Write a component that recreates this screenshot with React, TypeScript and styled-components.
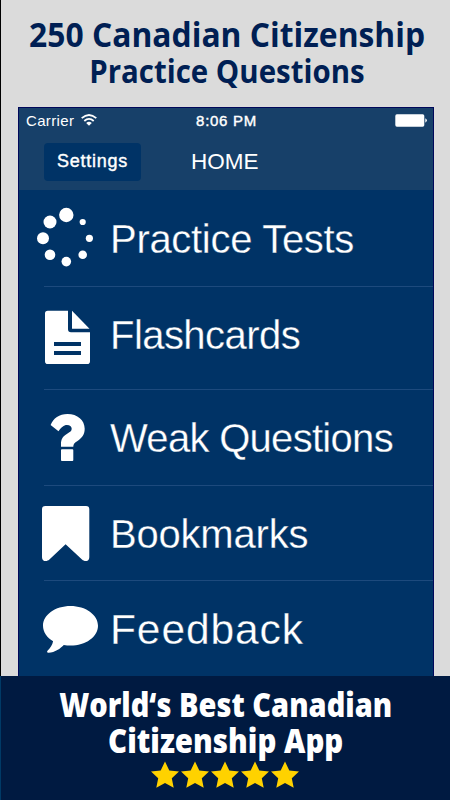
import React from "react";
import styled, { createGlobalStyle } from "styled-components";

const GlobalStyle = createGlobalStyle`
  * { box-sizing: border-box; }
  body { margin: 0; background: #dbdbdb; }
`;

const Page = styled.main`
  width: 450px;
  height: 800px;
  display: flex;
  flex-direction: column;
  overflow: hidden;
  background: #dbdbdb;
  color: #fff;
`;

const Upper = styled.div`
  height: 676px;
  border-left: 1px solid #000;
  padding: 0 16px 0 17px;
`;

const Headline = styled.h1`
  margin: 0;
  height: 107px;
  padding-top: 15px;
  display: flex;
  flex-direction: column;
  align-items: center;
  color: #001f54;
`;

const Banner = styled.footer`
  height: 124px;
  padding: 11px 1px 0 0;
  display: flex;
  flex-direction: column;
  align-items: center;
  background: #001a41;
  border-left: 1px solid #003a66;
`;

const PromoLine = styled.span<{ $size: number; $weight: number; $scale: number; $height: number; $shift?: number }>`
  font-family: "Open Sans", "Noto Sans", sans-serif;
  font-size: ${(p) => p.$size}px;
  font-weight: ${(p) => p.$weight};
  line-height: ${(p) => p.$height}px;
  white-space: nowrap;
  transform: translateX(${(p) => p.$shift ?? 0}px) scaleX(${(p) => p.$scale});
`;

const Phone = styled.section`
  height: 569px;
  border: 1px solid #00085a;
  border-bottom: 0;
  background: #003366;
  font-family: "Liberation Sans", Arial, sans-serif;
`;

const Header = styled.header`
  height: 82px;
  background: #174069;
`;

const StatusBar = styled.div`
  height: 27px;
  padding: 0 6px 2px 7px;
  display: grid;
  grid-template-columns: 1fr auto 1fr;
  align-items: center;
  font-size: 15px;
`;

const Carrier = styled.div`
  display: flex;
  align-items: center;
  gap: 7px;
  letter-spacing: 0.35px;

  svg { margin-top: -1px; }
`;

const Clock = styled.div`
  font-size: 15px;
  letter-spacing: 0.7px;
  -webkit-text-stroke: 0.4px #fff;
`;

const Battery = styled.svg`
  justify-self: end;
`;

const NavBar = styled.div`
  height: 55px;
  padding: 8px 0 0 25px;
  display: flex;
  align-items: flex-start;
  gap: 50px;
`;

const SettingsButton = styled.button`
  width: 97px;
  height: 38px;
  padding: 0 0 1px;
  border: 0;
  border-radius: 4px;
  background: #003366;
  color: #fff;
  font: 18px "Liberation Sans", Arial, sans-serif;
  letter-spacing: 0.75px;
  -webkit-text-stroke: 0.4px #fff;
`;

const Title = styled.h2`
  margin: 0;
  font-size: 22.5px;
  font-weight: 400;
  line-height: 38px;
`;

const Row = styled.div<{ $height: number }>`
  height: ${(p) => p.$height}px;
  display: flex;
  align-items: center;
  background: linear-gradient(#1d4a7d, #1d4a7d) 25px 100% / 100% 1px no-repeat;

  &:last-child { background: none; }
`;

const IconCell = styled.svg`
  flex: none;
  width: 91px;
  height: 100%;
  fill: #fff;
`;

const Label = styled.span<{ $size: number; $spacing: number; $drop: number }>`
  font-size: ${(p) => p.$size}px;
  letter-spacing: ${(p) => p.$spacing}px;
  line-height: 48px;
  white-space: nowrap;
  margin-top: ${(p) => p.$drop}px;
  -webkit-text-stroke: 0.3px #003366;
`;

const Stars = styled.div`
  display: flex;
  gap: 2px;
  margin-top: 3px;
`;

const TestsIcon = () => (
  <>
    <circle cx="66.3" cy="215" r="7.2" />
    <circle cx="50" cy="222" r="6.5" />
    <circle cx="43" cy="238.3" r="6" />
    <circle cx="50" cy="254.7" r="5.3" />
    <circle cx="66.3" cy="261.6" r="4.8" />
    <circle cx="82.7" cy="254.7" r="4.3" />
    <circle cx="89.4" cy="238.3" r="3.6" />
    <circle cx="82.7" cy="222" r="3.1" />
  </>
);

const FileIcon = () => (
  <>
    <path
      fillRule="evenodd"
      d="M47.8 310.7H68V329.3Q68 332.3 71 332.3H90V361.2Q90 364 87.2 364H47.8Q45 364 45 361.2V313.5Q45 310.7 47.8 310.7ZM54 342V346H81V342ZM54 351V355H81V351Z"
    />
    <path d="M72 310.8L89.5 328.8H72Z" />
  </>
);

const QuestionIcon = () => (
  <path d="M50.6 425C53.3 418.4 59.3 414 67.5 414C77.5 414 84.7 420.2 84.7 428.8C84.7 435.2 81.4 438.4 77.5 440.9C74.5 442.8 73.3 443.9 73.3 446.7H61V444.2C61 439.5 62.6 436.4 66.8 434C70.2 432 71.7 430.9 71.7 428.8C71.7 426.6 69.8 425 67 425C63.5 425 61.6 427.3 58.5 431.2ZM61.9 449.3H72.4Q73.3 449.3 73.3 450.2V460.1Q73.3 461 72.4 461H61.9Q61 461 61 460.1V450.2Q61 449.3 61.9 449.3Z" />
);

const BookmarkIcon = () => (
  <path d="M45.4 506H86Q89.3 506 89.3 509.2V557.2C89.3 561.2 85 562.3 82 559.6L65.6 544.3L49.4 559.6C46.4 562.3 42 561.2 42 557.2V509.2Q42 506 45.4 506Z" />
);

const CommentIcon = () => (
  <path d="M70.5 606C85.7 606 98 614.8 98 625.7C98 636.8 85.7 645.6 70.5 645.6C68.2 645.6 66 645.4 63.8 645C60.6 648.4 55 652.5 48.5 652.8C46.9 652.9 46.7 651.7 47.7 650.6C50.4 647.6 52.3 645 53.1 641.2C47 637.6 43 632 43 625.7C43 614.8 55.3 606 70.5 606Z" />
);

const menu = [
  { text: "Practice Tests", Icon: TestsIcon, top: 190, height: 97, size: 40, spacing: -0.3, drop: 1 },
  { text: "Flashcards", Icon: FileIcon, top: 287, height: 103, size: 40, spacing: -0.55, drop: -7 },
  { text: "Weak Questions", Icon: QuestionIcon, top: 390, height: 96, size: 40, spacing: -0.7, drop: 0 },
  { text: "Bookmarks", Icon: BookmarkIcon, top: 486, height: 95, size: 40, spacing: -0.2, drop: 1 },
  { text: "Feedback", Icon: CommentIcon, top: 581, height: 95, size: 42.5, spacing: 0.9, drop: 3 },
];

const Star = () => (
  <svg width="28" height="27" viewBox="0 0 28 27" fill="#ffd200">
    <path d="M14 .5L18.3 9.5L28 10.6L20.8 17.2L22.7 26.8L14 22L5.3 26.8L7.2 17.2L0 10.6L9.7 9.5Z" />
  </svg>
);

export default function App() {
  return (
    <>
      <GlobalStyle />
      <Page>
        <Upper>
          <Headline>
            <PromoLine $size={34} $weight={700} $scale={0.936} $height={38} $shift={1.5}>250 Canadian Citizenship</PromoLine>
            <PromoLine $size={33} $weight={700} $scale={0.892} $height={35} $shift={0.5}>Practice Questions</PromoLine>
          </Headline>
          <Phone>
            <Header>
              <StatusBar>
                <Carrier>
                  Carrier
                  <svg width="16" height="12" viewBox="0 0 16 12" fill="none" stroke="#fff" strokeWidth="1.8">
                    <path d="M.7 4.2Q8-2.3 15.3 4.2M3.3 7Q8 2.8 12.7 7" />
                    <path d="M5.2 8.9Q8 6.7 10.8 8.9L8 11.8Z" fill="#fff" stroke="none" />
                  </svg>
                </Carrier>
                <Clock>8:06 PM</Clock>
                <Battery width="32" height="13" viewBox="0 0 32 13" fill="#fff">
                  <rect x=".3" y=".3" width="29" height="12.4" rx="1.6" />
                  <path d="M30.3 4.3Q33.5 6.5 30.3 8.7Z" />
                </Battery>
              </StatusBar>
              <NavBar>
                <SettingsButton>Settings</SettingsButton>
                <Title>HOME</Title>
              </NavBar>
            </Header>
            {menu.map(({ text, Icon, top, height, size, spacing, drop }) => (
              <Row key={text} $height={height}>
                <IconCell viewBox={`19 ${top} 91 ${height}`}>
                  <Icon />
                </IconCell>
                <Label $size={size} $spacing={spacing} $drop={drop}>{text}</Label>
              </Row>
            ))}
          </Phone>
        </Upper>
        <Banner>
          <PromoLine $size={33} $weight={800} $scale={0.878} $height={36} $shift={1}>World‘s Best Canadian</PromoLine>
          <PromoLine $size={33} $weight={800} $scale={0.893} $height={35} $shift={1}>Citizenship App</PromoLine>
          <Stars>
            {[0, 1, 2, 3, 4].map((n) => <Star key={n} />)}
          </Stars>
        </Banner>
      </Page>
    </>
  );
}
